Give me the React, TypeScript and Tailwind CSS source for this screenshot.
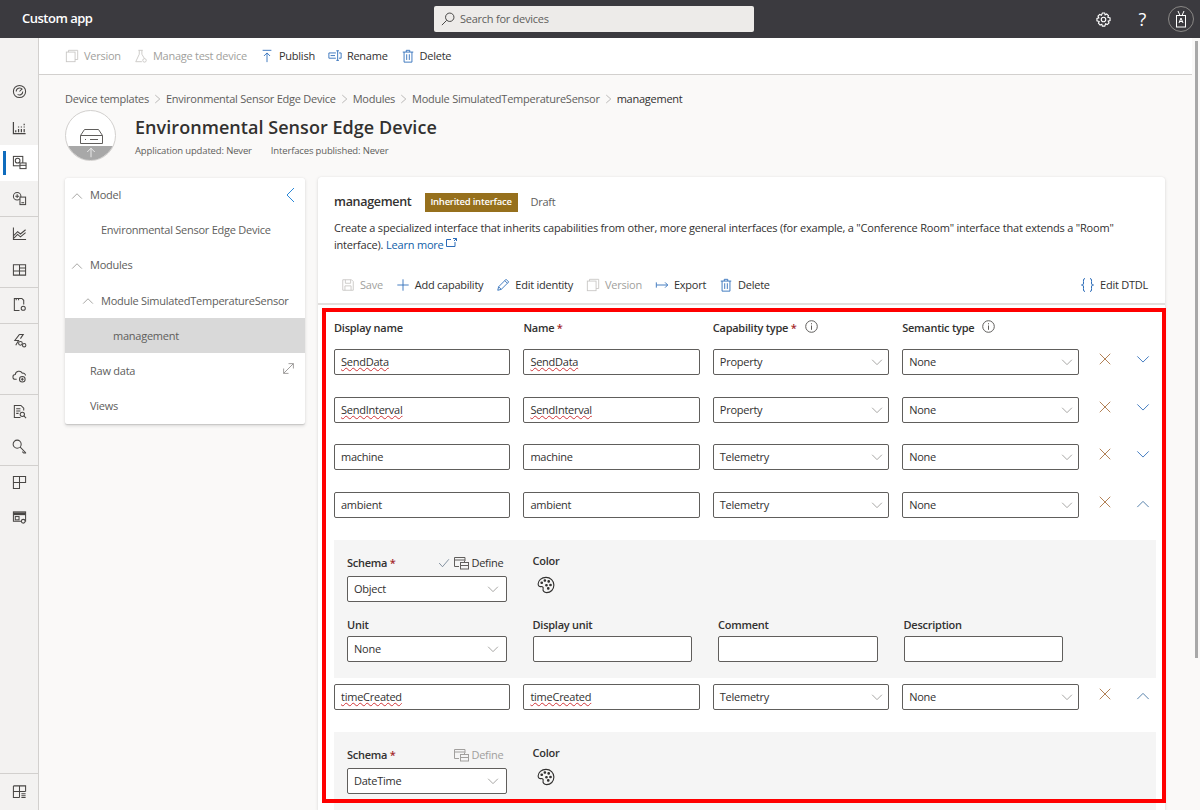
import React from "react";

const S = ({ children, w = 14, h = 14, c = "#605e5c", vb = "0 0 16 16", sw = 1 }: any) => (
  <svg width={w} height={h} viewBox={vb} fill="none" stroke={c} strokeWidth={sw} className="shrink-0">
    {children}
  </svg>
);
const R = ({ children, sw = 1.1 }: any) => (
  <S w={15} h={15} c="#484644" sw={sw}>{children}</S>
);

const Copy = ({ c = "#c8c6c4" }: any) => (
  <S c={c}><rect x="1.5" y="3.5" width="10" height="11" /><path d="M4 3.5V1.5H14.5V12H11.5" /></S>
);
const Flask = () => (
  <S c="#c8c6c4"><path d="M5 1.5H10M6 1.5V6L2 14.5H9M9 1.5V6L12 11" /><circle cx="12" cy="13" r="2" /></S>
);
const Up = () => (
  <S c="#2b6cb8"><path d="M3 1.5H13M8 15V4.5M4.5 8L8 4.5L11.5 8" /></S>
);
const Ren = () => (
  <S c="#2b6cb8"><path d="M9 4.5H1V10.5H9M3 7.5H8M11 2V13M9.5 2H12.5M9.5 13H12.5M12.5 4.5H15V10.5H12.5" /></S>
);
const Trash = () => (
  <S c="#2b6cb8"><path d="M2 3.5H14M6 3.5V1.5H10V3.5M3.5 3.5V15H12.5V3.5M6.5 6V12.5M9.5 6V12.5" /></S>
);
const Save = () => (
  <S c="#c8c6c4"><path d="M2 2H12L14 4V14H2ZM5 2V6H11V2M4.5 14V9H11.5V14" /></S>
);
const Plus = () => (
  <S c="#2b6cb8"><path d="M8 1.5V14.5M1.5 8H14.5" /></S>
);
const Pen = () => (
  <S c="#2b6cb8"><path d="M2 14L3 10L11.5 1.5L14.5 4.5L6 13ZM10 3L13 6M3 10L6 13" /></S>
);
const Exp = () => (
  <S c="#2b6cb8"><path d="M1.5 5V11M2 8H14.5M11.5 5L14.5 8L11.5 11" /></S>
);
const ChevD = ({ c = "#8a8886", w = 14 }: any) => (
  <S w={w} h={w} c={c}><path d="M1.5 5L8 11.5L14.5 5" /></S>
);
const ChevU = ({ c = "#605e5c", w = 14 }: any) => (
  <S w={w} h={w} c={c}><path d="M1.5 11.5L8 5L14.5 11.5" /></S>
);
const XIcon = () => (
  <S w={14} h={14} c="#a8703f"><path d="M2 2L14 14M14 2L2 14" /></S>
);
const Info = () => (
  <S w={13} h={13} c="#605e5c" vb="0 0 13 13">
    <circle cx="6.5" cy="6.5" r="5.8" />
    <path d="M6.5 5.5V9.8M6.5 3.2V4.3" />
  </S>
);
const Palette = () => (
  <S w={18} h={18} c="#323130">
    <path d="M8 1.2C4 1.2 1 4 1 7.2C1 9.2 2.5 9.6 3.6 9.4C5.2 9.2 5.8 10.2 5.4 11.4C5 13 6.2 14.8 8.6 14.8C12.2 14.8 15 12 15 8C15 4.2 12 1.2 8 1.2Z" />
    <circle cx="4.2" cy="6" r=".7" fill="#323130" />
    <circle cx="7" cy="4" r=".7" fill="#323130" />
    <circle cx="10.4" cy="4.8" r=".7" fill="#323130" />
    <circle cx="12" cy="8" r=".7" fill="#323130" />
    <circle cx="10" cy="11" r=".7" fill="#323130" />
    <circle cx="8.4" cy="8.2" r=".7" fill="#323130" />
  </S>
);
const Define = ({ c }: any) => (
  <S w={16} h={14} c={c} vb="0 0 16 14">
    <path d="M6 10.5H1.5V1.5H12V5M1.5 4H12" />
    <rect x="7.5" y="6.5" width="8" height="6.5" fill="#f5f5f5" />
    <path d="M7.5 9.5H15.5M11.5 5V6.5" />
  </S>
);
const Crumb = () => (
  <S w={9} h={10} c="#8a8886"><path d="M4 1L12 8L4 15" /></S>
);

const rail: Record<string, React.ReactNode> = {
  gauge: <R><circle cx="8" cy="8" r="6.5" /><path d="M4.5 8A3.5 3.5 0 0 1 11 6M11.5 8A3.5 3.5 0 0 1 6 11M8 8L11 5" /></R>,
  bars: <R sw={1.3}><path d="M1.5 2V14.5H14.5M4 13V11M7 13V9.5M7 8V7M10 13V9.5M10 8V7M13 13V9.5M13 8V7M13 5.5V4" /></R>,
  dev: <R><rect x="1.5" y="1.5" width="10" height="10" /><circle cx="6" cy="6" r="2.5" /><rect x="8.5" y="8.5" width="6.5" height="6" fill="#fff" /><path d="M8.5 11H15" /></R>,
  grp: <R><circle cx="5.5" cy="5.5" r="4" /><path d="M3.5 5.5H7.5M5.5 3.5V7.5" /><rect x="8.5" y="6.5" width="6" height="8" fill="#f3f2f1" /><path d="M10 12.5H13" /></R>,
  chart: <R><path d="M1.5 1.5V14.5H15M2 10L6 6L9 8.5L14.5 4M2 13L6 9L9 11.5L14.5 7" /></R>,
  dash: <R><path d="M1.5 3H14.5V14H1.5ZM8 3V14M1.5 9.5H14.5M8 6.5H14.5" /></R>,
  doc: <R><path d="M8 14.5H2.5V1.5H10.5L12.5 3.5V8" /><path d="M4.5 1.5V3.5M7 1.5V3.5" /><circle cx="12" cy="12" r="2.2" /></R>,
  rule: <R><path d="M8 1.5L3 8H7L4 13M8 1.5H12L9 6" /><circle cx="9" cy="11" r="2" /><circle cx="13" cy="13" r="1.8" /></R>,
  cloud: <R><path d="M5 12H3.5A2.5 2.5 0 0 1 3.5 7A4 4 0 0 1 11 5.5A3 3 0 0 1 14.5 8" /><circle cx="11" cy="12" r="3" /><path d="M11 10.5V13.5M9.5 12H12.5" /></R>,
  log: <R><path d="M9 14.5H2.5V1.5H9.5L12.5 4.5V7M4.5 5H9M4.5 7.5H9M4.5 10H7" /><circle cx="11" cy="11" r="2.3" /><path d="M12.7 12.7L15 15" /></R>,
  key: <R><circle cx="5.5" cy="5.5" r="4.3" /><path d="M8.5 8.5L14.5 14.5V15H12.5L11 13.5" /></R>,
  tile: <R><path d="M1.5 8V14.5H8V8ZM1.5 8V1.5H8V8ZM8 1.5H14.5V8H8" /></R>,
  disp: <R><rect x="1.5" y="2" width="13" height="10" /><path d="M1.5 4H14.5" strokeWidth="3" /><rect x="3.5" y="7" width="4" height="3.5" /><circle cx="12" cy="12" r="2" fill="#f3f2f1" /></R>,
  grid: <R><path d="M1.5 2H14.5V8M1.5 2V14.5H8M8 2V14.5M1.5 8H14.5M10 10.5H14.5M10 12.5H14.5M10 14.5H14.5" /></R>,
};

function RailItem({ k, active }: { k: string; active?: boolean }) {
  return (
    <div className={`relative flex h-[35.5px] items-center justify-center ${active ? "bg-white" : ""}`}>
      {active && <span className="absolute left-[3px] top-[6px] h-[24px] w-[3px] bg-[#0f6cbd]" />}
      {rail[k]}
    </div>
  );
}

const Group = ({ items, active, line = true }: { items: string[]; active?: string; line?: boolean }) => (
  <div className={line ? "-mb-px border-b border-[#d2d0ce]" : ""}>
    {items.map((k) => (
      <RailItem key={k} k={k} active={k === active} />
    ))}
  </div>
);

const Cmd = ({ icon, label, off }: any) => (
  <div className={`flex items-center gap-[5px] ${off ? "text-[#a19f9d]" : "text-[#323130]"}`}>
    {icon}
    <span>{label}</span>
  </div>
);

const Field = ({ v, wavy, w = "w-[176.4px]" }: any) => (
  <div className={`flex h-[26px] ${w} items-center rounded-[2px] border border-[#605e5c] bg-white px-[6px] text-[#323130]`}>
    <span className={wavy ? "underline decoration-[#d13438] decoration-wavy decoration-1 underline-offset-1" : ""}>{v}</span>
  </div>
);

const Sel = ({ v, w = "w-[176.4px]", pr = "pr-[5px]" }: any) => (
  <div className={`flex h-[26px] ${w} items-center justify-between rounded-[2px] border border-[#605e5c] bg-white pl-[6px] ${pr} text-[#323130]`}>
    <span>{v}</span>
    <ChevD c="#8a8886" w={12} />
  </div>
);

const Row = ({ a, b, t, wavy, open, className = "" }: any) => (
  <div className={`flex items-center gap-[13px] ${className}`}>
    <Field v={a} wavy={wavy} />
    <Field v={b} wavy={wavy} />
    <Sel v={t} />
    <Sel v="None" />
    <div className="-ml-[13px] flex w-[71px] -translate-y-[3px] items-center justify-between pl-[19px]">
      <XIcon />
      {open ? <span className="translate-y-[2px]"><ChevU c="#3f6f9f" /></span> : <ChevD c="#2b6cb8" />}
    </div>
  </div>
);

const Label = ({ children, className = "" }: any) => (
  <div className={`font-semibold leading-4 text-[#323130] ${className}`}>{children}</div>
);
const Req = () => <span className="text-[#a4262c]"> *</span>;

const SchemaRow = ({ v, on }: any) => (
  <div className="flex gap-[26px]">
    <div className="w-[159.5px]">
      <div className="flex h-[16px] items-center justify-between pr-[3px]">
        <Label>Schema<Req /></Label>
        <div className={`flex items-center gap-[2px] ${on ? "text-[#323130]" : "text-[#a19f9d]"}`}>
          {on && <span className="mr-[1px]"><S w={12} h={12} c="#5f7286"><path d="M1.5 8L6 13L14.5 3" /></S></span>}
          <Define c={on ? "#605e5c" : "#a19f9d"} />
          <span>Define</span>
        </div>
      </div>
      <div className="mt-[5px]"><Sel v={v} w="w-full" pr="pr-[7px]" /></div>
    </div>
    <div className="-mt-[2px] w-[159.5px]">
      <Label>Color</Label>
      <div className="ml-[4px] mt-[7px]"><Palette /></div>
    </div>
  </div>
);

const Nav = ({ label, indent, chev, sel, right }: any) => (
  <div className={`relative flex h-[35.1px] items-center whitespace-nowrap ${sel ? "bg-[#d9d9d9]" : ""}`} style={{ paddingLeft: indent }}>
    {chev && <span className="absolute" style={{ left: indent - 19 }}><ChevU c="#8a8886" w={12} /></span>}
    <span>{label}</span>
    {right && <span className="absolute right-[10px] top-[9px]">{right}</span>}
  </div>
);

export default function App() {
  return (
    <div className="flex h-[810px] w-[1200px] flex-col overflow-hidden bg-[#faf9f8] text-[11px] tracking-[-0.25px] text-[#323130] [font-family:'Open_Sans','Liberation_Sans',sans-serif]">
      <header className="flex h-[38px] shrink-0 items-center bg-[#3b3a3f] text-white">
        <div className="ml-[22px] w-[412px] text-[13px] font-semibold tracking-[-0.5px]">Custom app</div>
        <div className="flex h-[26px] w-[320px] items-center gap-[5px] rounded-[2px] bg-[#edebe9] pl-[7px] text-[#605e5c]">
          <S w={14} h={14} c="#323130"><path d="M1 15L6.5 9.5" /><circle cx="10" cy="6" r="4.8" /></S>
          <span className="pt-px">Search for devices</span>
        </div>
        <div className="ml-auto flex items-center">
          <S w={15} h={15} c="#ffffff" vb="0 0 16 16" sw={1.2}>
            <circle cx="8" cy="8" r="2.4" />
            <path d="M6.8 1H9.2L9.7 3L11.4 2.1L13.3 3.9L12.6 5.6L15 6.4V9.2L13 9.8L13.9 11.6L12 13.4L10.2 12.6L9.4 15H6.8L6.2 13L4.4 13.9L2.6 12L3.4 10.2L1 9.4V6.8L3 6.2L2.1 4.4L4 2.6L5.8 3.4Z" />
          </S>
          <span className="ml-[27px] text-[18px] leading-none text-white">?</span>
          <div className="ml-[22px] mr-[6px] flex h-[26px] w-[26px] items-center justify-center rounded-full border border-[#8a8886]">
            <svg width="14" height="18" viewBox="0 0 14 18" fill="none" stroke="#fff" strokeWidth="1">
              <rect x="2.5" y="5.5" width="9" height="11.5" />
              <path d="M4 1L6 5.5M10 1L8 5.5M5 13L7 8L9 13M5.5 11.5H8.5" />
            </svg>
          </div>
        </div>
      </header>

      <div className="flex min-h-0 flex-1">
        <aside className="flex w-[39px] shrink-0 flex-col border-r border-[#d2d0ce] bg-[#f3f2f1] pt-[36px]">
          <Group items={["gauge", "bars", "dev", "grp"]} active="dev" />
          <Group items={["chart", "dash"]} />
          <Group items={["doc"]} />
          <Group items={["rule", "cloud"]} />
          <Group items={["log", "key"]} />
          <Group items={["tile", "disp"]} line={false} />
          <div className="mt-auto h-[37px] border-t border-[#d2d0ce]"><RailItem k="grid" /></div>
        </aside>

        <main className="flex min-w-0 flex-1 flex-col">
          <div className="flex h-[37px] shrink-0 items-center gap-[13px] border-b border-[#d2d0ce] bg-white pl-[26px]">
            <Cmd off icon={<Copy />} label="Version" />
            <Cmd off icon={<Flask />} label="Manage test device" />
            <Cmd icon={<Up />} label="Publish" />
            <Cmd icon={<Ren />} label="Rename" />
            <Cmd icon={<Trash />} label="Delete" />
          </div>

          <div className="pl-[26px] pt-[16px]">
            <div className="flex h-[16px] items-center gap-[4px] text-[#605e5c]">
              <span>Device templates</span><Crumb />
              <span>Environmental Sensor Edge Device</span><Crumb />
              <span>Modules</span><Crumb />
              <span>Module SimulatedTemperatureSensor</span><Crumb />
              <span className="font-medium text-[#323130]">management</span>
            </div>
            <div className="mt-[3px] flex items-start gap-[19px]">
              <div className="relative h-[51px] w-[51px] overflow-hidden rounded-full border border-[#d2d0ce] bg-white">
                <div className="absolute bottom-0 left-0 right-0 flex h-[14px] justify-center bg-[#a8a8a8]">
                  <S w={12} h={12} c="#fff"><path d="M8 15V3M3 8L8 3L13 8" /></S>
                </div>
                <div className="absolute left-[14px] top-[18px]">
                  <svg width="23" height="15" viewBox="0 0 23 15" fill="none" stroke="#605e5c">
                    <path d="M4.5 .5H18.5L22.5 6.5V14.5H.5V6.5Z" />
                    <path d="M.5 6.5H22.5" />
                    <path d="M5 10.5H6M10 10.5H18" />
                  </svg>
                </div>
              </div>
              <div className="pt-[5px]">
                <div className="text-[18px] font-semibold leading-[24px] tracking-[0.05px] text-[#323130]">Environmental Sensor Edge Device</div>
                <div className="mt-[6px] flex gap-[19px] text-[9.5px] leading-[12px] tracking-[-0.15px] text-[#605e5c]">
                  <span>Application updated: Never</span>
                  <span>Interfaces published: Never</span>
                </div>
              </div>
            </div>
          </div>

          <div className="mt-[16px] flex min-h-0 flex-1 items-start gap-[13px] pl-[26px]">
            <nav className="mt-[1px] w-[240px] shrink-0 rounded-[2px] bg-white text-[#605e5c] shadow-[0_1.6px_3.6px_rgba(0,0,0,0.13),0_0.3px_0.9px_rgba(0,0,0,0.11)]">
              <Nav label="Model" indent={25} chev right={<span className="-mr-[1px] block"><S w={12} h={16} c="#2b88d8" vb="0 0 12 16"><path d="M10 1L3 8L10 15" /></S></span>} />
              <Nav label="Environmental Sensor Edge Device" indent={36} />
              <Nav label="Modules" indent={25} chev />
              <Nav label="Module SimulatedTemperatureSensor" indent={36} chev />
              <Nav label="management" indent={48} sel />
              <Nav label="Raw data" indent={25} right={<S w={13} h={13} c="#8a8886"><path d="M2 14L14 2M8 2H14V8M2 8V14H8" /></S>} />
              <Nav label="Views" indent={25} />
            </nav>

            <section className="relative h-full w-[847px] shrink-0 rounded-t-[3px] bg-white shadow-[0_1.6px_3.6px_rgba(0,0,0,0.13),0_0.3px_0.9px_rgba(0,0,0,0.11)]">
              <div className="px-[16px] pt-[15px]">
                <div className="flex h-[20px] items-center">
                  <span className="text-[12.5px] font-semibold tracking-[-0.3px]">management</span>
                  <span className="ml-[13px] flex h-[19px] w-[93px] items-center justify-center bg-[#96701d] text-[9.5px] font-semibold text-white">Inherited interface</span>
                  <span className="ml-[13px] text-[#605e5c]">Draft</span>
                </div>
                <p className="mt-[7px] w-[800px] leading-[17px] tracking-[-0.2px] text-[#323130]">
                  Create a specialized interface that inherits capabilities from other, more general interfaces (for example, a "Conference Room" interface that extends a "Room" interface). <span className="text-[#0f5ea8]">Learn more</span>{" "}
                  <svg className="inline-block align-[2px]" width="11" height="9" viewBox="0 0 11 9" fill="none" stroke="#2b6cb8"><path d="M5 1.5H.5V8.5H9V4M7 .5H10.5V3M10.5 .5L8 3" /></svg>
                </p>
              </div>
              <div className="mt-[16px] flex h-[36px] items-center gap-[13px] border-b-2 border-[#e1dfdd] pb-[2px] pl-[23px] pr-[17px]">
                <Cmd off icon={<Save />} label="Save" />
                <Cmd icon={<Plus />} label="Add capability" />
                <Cmd icon={<Pen />} label="Edit identity" />
                <Cmd off icon={<Copy />} label="Version" />
                <Cmd icon={<Exp />} label="Export" />
                <Cmd icon={<Trash />} label="Delete" />
                <div className="ml-auto flex items-center gap-[6px]">
                  <svg width="13" height="14" viewBox="0 0 13 14" fill="none" stroke="#2b6cb8">
                    <path d="M4 .5C2 .5 2.5 3 2.5 5S1.5 7 .5 7C1.5 7 2.5 7 2.5 9S2 13.5 4 13.5M9 .5C11 .5 10.5 3 10.5 5S11.5 7 12.5 7C11.5 7 10.5 7 10.5 9S11 13.5 9 13.5" />
                  </svg>
                  <span>Edit DTDL</span>
                </div>
              </div>

              <div className="pl-[16px] pt-[15px]">
                <div className="flex h-[16px] items-center gap-[13px]">
                  <Label className="w-[176.4px]">Display name</Label>
                  <Label className="w-[176.4px]">Name<Req /></Label>
                  <Label className="flex w-[176.4px] items-center gap-[8px]"><span>Capability type<Req /></span><span className="-mt-[3px]"><Info /></span></Label>
                  <Label className="flex w-[176.4px] items-center gap-[8px]"><span>Semantic type</span><span className="-mt-[3px]"><Info /></span></Label>
                </div>
                <Row className="mt-[13px]" a="SendData" b="SendData" t="Property" wavy />
                <Row className="mt-[22px]" a="SendInterval" b="SendInterval" t="Property" wavy />
                <Row className="mt-[21px]" a="machine" b="machine" t="Telemetry" />
                <Row className="mt-[22px]" a="ambient" b="ambient" t="Telemetry" open />

                <div className="mt-[22px] h-[138px] w-[822px] bg-[#f5f5f5] pl-[13px] pt-[15px]">
                  <SchemaRow v="Object" on />
                  <div className="mt-[15px] flex h-[16px] gap-[26px]">
                    <Label className="w-[159.5px]">Unit</Label>
                    <Label className="w-[159.5px]">Display unit</Label>
                    <Label className="w-[159.5px]">Comment</Label>
                    <Label className="w-[159.5px]">Description</Label>
                  </div>
                  <div className="mt-[3px] flex gap-[26px]">
                    <Sel v="None" w="w-[159.5px]" pr="pr-[7px]" />
                    <Field v="" w="w-[159.5px]" />
                    <Field v="" w="w-[159.5px]" />
                    <Field v="" w="w-[159.5px]" />
                  </div>
                </div>

                <Row className="mt-[6px]" a="timeCreated" b="timeCreated" t="Telemetry" wavy open />
                <div className="mt-[22px] h-[100px] w-[822px] bg-[#f5f5f5] pl-[13px] pt-[15px]">
                  <SchemaRow v="DateTime" />
                </div>
              </div>

              <div className="pointer-events-none absolute left-[4px] top-[131px] h-[495px] w-[844px] border-4 border-[#ff0000]" />
            </section>
          </div>
        </main>

        <div className="relative w-[8px] shrink-0 bg-[#faf9f8]">
          <span className="absolute left-[3px] top-[3px] h-[617px] w-[3px] bg-[#a8a8a8]" />
        </div>
      </div>
    </div>
  );
}
